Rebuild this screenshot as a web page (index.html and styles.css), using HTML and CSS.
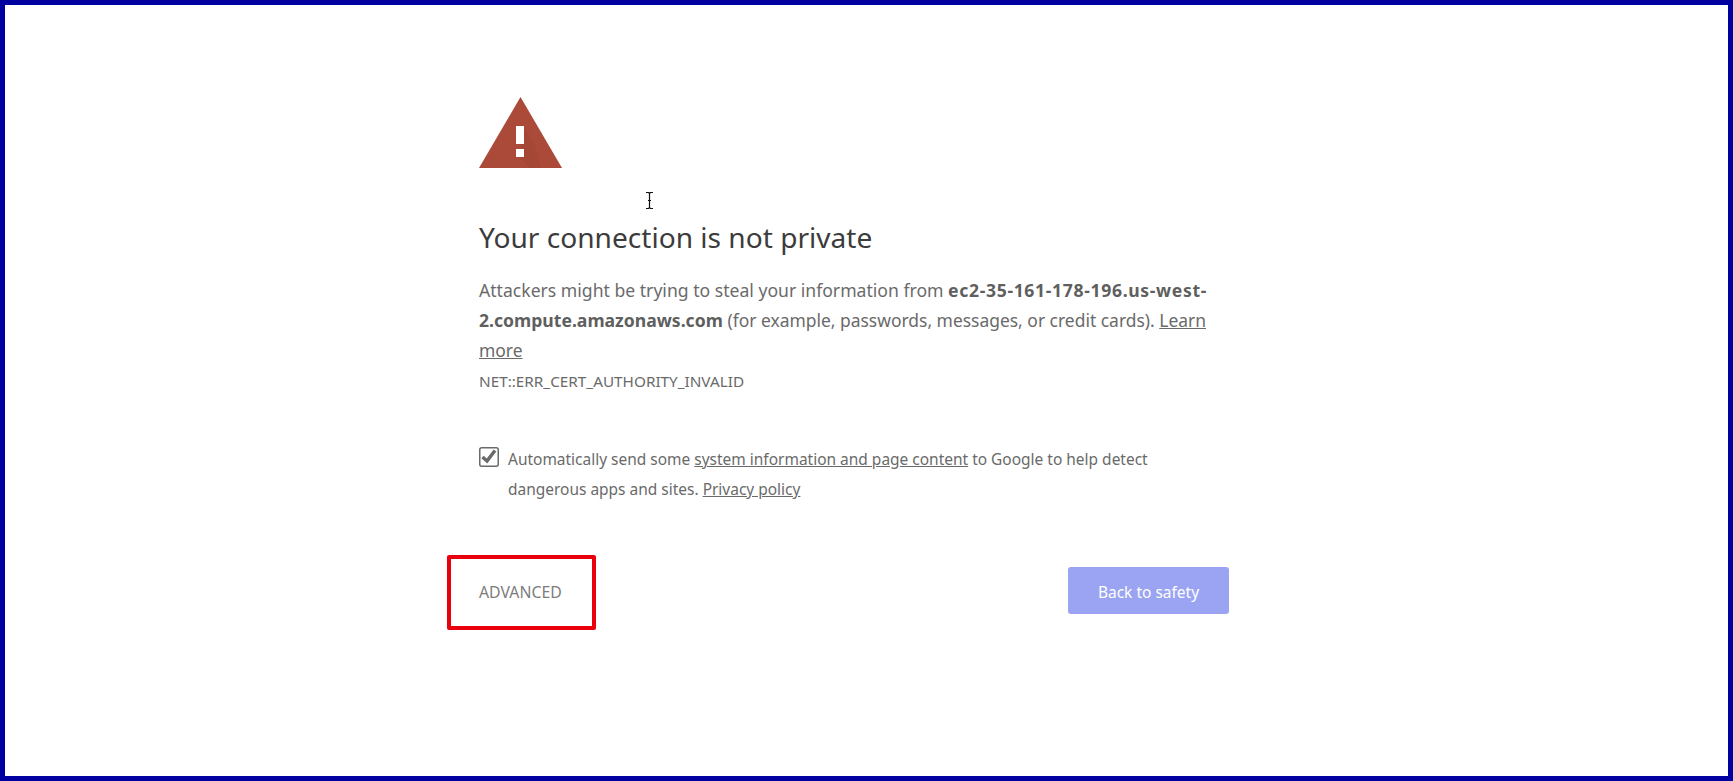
FILE: index.html
```html
<!DOCTYPE html>
<html lang="en">
<head>
<meta charset="utf-8">
<title>Privacy error</title>
<link rel="stylesheet" href="styles.css">
</head>
<body>
<div class="frame">
  <main class="interstitial">
    <svg class="warning" width="83" height="72" viewBox="0 0 83 72" aria-hidden="true">
      <path class="warning-tri" d="M41.500 0L83 71H0Z"/>
      <path class="warning-shade" d="M45 47L45 29L55 46L62 71H50L41 60H45V52L41 47Z"/>
      <rect class="warning-mark" x="37" y="29" width="8" height="18"/>
      <rect class="warning-mark" x="37" y="52" width="8" height="8"/>
    </svg>
    <h1 class="title">Your connection is not private</h1>
    <p class="message">Attackers might be trying to steal your information from <strong><span class="host-start">ec2-35-161-178-196.us-west-</span>2.compute.amazonaws.com</strong> <span class="message-tail">(for example, passwords, messages, or credit cards). <a class="link" href="#">Learn more</a></span></p>
    <p class="code">NET::ERR_CERT_AUTHORITY_INVALID</p>
    <div class="optin">
      <svg class="checkbox" width="20" height="20" viewBox="0 0 20 20" aria-hidden="true">
        <rect class="checkbox-box" x="0.750" y="0.750" width="18.500" height="18.500" rx="2"/>
        <path class="checkbox-tick" d="M3.500 10L8 14L16 3.500"/>
      </svg>
      <p class="optin-text">Automatically send some <a class="link" href="#">system information and page content</a> to Google to help detect dangerous apps and sites. <a class="link" href="#">Privacy policy</a></p>
    </div>
    <div class="actions">
      <span class="advanced">ADVANCED</span>
      <span class="primary">Back to safety</span>
    </div>
  </main>
  <div class="highlight"></div>
  <svg class="cursor" width="9" height="17" viewBox="0 0 9 17" aria-hidden="true">
    <path class="cursor-path" d="M1 .5H3.500L4.500 1.500L5.500 .5H8M4.500 1.500V15.500M1 16.500H3.500L4.500 15.500L5.500 16.500H8M3 8.500H6"/>
  </svg>
</div>
</body>
</html>
```
FILE: styles.css
```css
* { box-sizing: border-box; }
html, body { margin: 0; height: 100%; }
body { background: #fff; font-family: "Noto Sans", "Open Sans", sans-serif; color: #6a6a6a; overflow: hidden; }
.frame { position: relative; height: 781px; border: 5px solid #0000a0; padding: 92px 0 0 474px; }
.interstitial { width: 750px; }
.warning { display: block; }
.warning-tri { fill: #ab4a38; }
.warning-shade { fill: #a54735; }
.warning-mark { fill: #fff; }
.title { margin: 49px 0 0; font-size: 28.100px; font-weight: 400; line-height: 38px; color: #3c3c3c; }
.message { margin: 19px 0 0; font-size: 17.600px; line-height: 30px; }
.message strong { font-weight: 700; color: #5f5f5f; }
.host-start { letter-spacing: 0.650px; }
.message-tail { font-size: 17.450px; }
.link { color: inherit; text-decoration: underline; }
.code { margin: 1px 0 0; font-size: 15.300px; line-height: 30px; }
.optin { display: flex; gap: 9px; margin-top: 48px; }
.checkbox { flex: none; margin-top: 3px; }
.checkbox-box { fill: #fff; stroke: #6a6a6a; stroke-width: 1.500; }
.checkbox-tick { fill: none; stroke: #6a6a6a; stroke-width: 3.500; }
.optin-text { margin: 0; width: 660px; font-size: 15.480px; line-height: 30px; }
.actions { display: flex; justify-content: space-between; align-items: center; margin-top: 63px; }
.advanced { padding-top: 2px; font-size: 15.800px; color: #7c7c7c; }
.primary { display: flex; align-items: center; justify-content: center; width: 161px; height: 47px; padding-top: 2px; border-radius: 3px; background: #9aa4f2; color: #fff; font-size: 15.500px; }
.highlight { position: absolute; left: 442px; top: 550px; width: 149px; height: 75px; border: 4px solid #e8000d; border-radius: 2px; }
.cursor { position: absolute; left: 640px; top: 187px; }
.cursor-path { fill: none; stroke: #111; stroke-width: 1.200; }
```
